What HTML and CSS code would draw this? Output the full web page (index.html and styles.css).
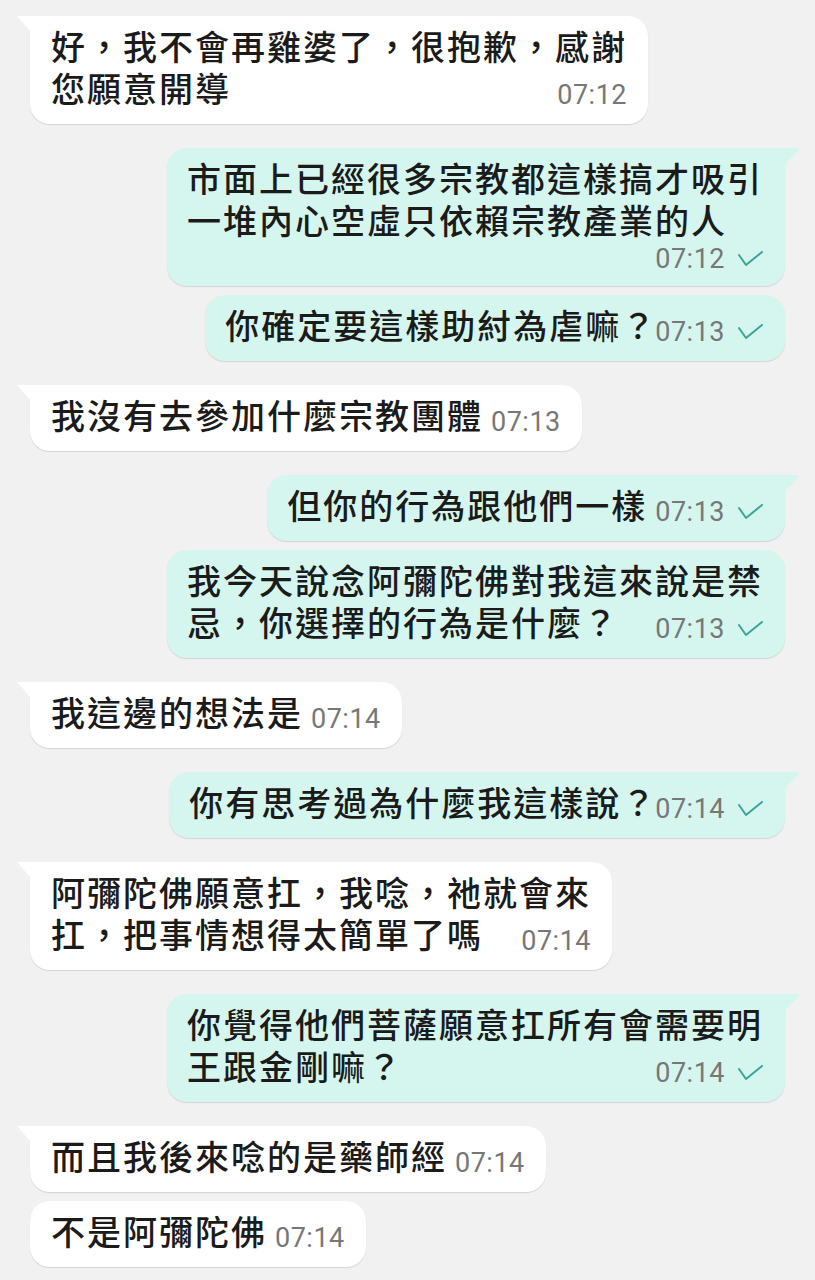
FILE: index.html
```html
<!DOCTYPE html>
<html lang="zh-Hant">
<head>
  <meta charset="UTF-8">
  <meta name="viewport" content="width=device-width, initial-scale=1.0">
  <title>聊天</title>
  <link rel="stylesheet" href="styles.css">
</head>
<body>

  <div class="chat">
    <div class="msg in first">好，我不會再雞婆了，很抱歉，感謝<br>您願意開導<span class="meta"><span class="time">07:12</span></span></div>

    <div class="msg out first tall">市面上已經很多宗教都這樣搞才吸引<br>一堆內心空虛只依賴宗教產業的人<span class="meta"><span class="time">07:12</span><svg class="tick" viewBox="0 0 25 16"><polyline points="1,4 8,14 24,1"/></svg></span></div>
    <div class="msg out">你確定要這樣助紂為虐嘛<span class="q">？</span><span class="meta"><span class="time">07:13</span><svg class="tick" viewBox="0 0 25 16"><polyline points="1,4 8,14 24,1"/></svg></span></div>

    <div class="msg in first">我沒有去參加什麼宗教團體<span class="meta"><span class="time">07:13</span></span></div>

    <div class="msg out first">但你的行為跟他們一樣<span class="meta"><span class="time">07:13</span><svg class="tick" viewBox="0 0 25 16"><polyline points="1,4 8,14 24,1"/></svg></span></div>
    <div class="msg out">我今天說念阿彌陀佛對我這來說是禁<br>忌，你選擇的行為是什麼？<span class="meta"><span class="time">07:13</span><svg class="tick" viewBox="0 0 25 16"><polyline points="1,4 8,14 24,1"/></svg></span></div>

    <div class="msg in first">我這邊的想法是<span class="meta"><span class="time">07:14</span></span></div>

    <div class="msg out first">你有思考過為什麼我這樣說<span class="q">？</span><span class="meta"><span class="time">07:14</span><svg class="tick" viewBox="0 0 25 16"><polyline points="1,4 8,14 24,1"/></svg></span></div>

    <div class="msg in first">阿彌陀佛願意扛，我唸，祂就會來<br>扛，把事情想得太簡單了嗎<span class="meta"><span class="time">07:14</span></span></div>

    <div class="msg out first">你覺得他們菩薩願意扛所有會需要明<br>王跟金剛嘛？<span class="meta"><span class="time">07:14</span><svg class="tick" viewBox="0 0 25 16"><polyline points="1,4 8,14 24,1"/></svg></span></div>

    <div class="msg in first">而且我後來唸的是藥師經<span class="meta"><span class="time">07:14</span></span></div>
    <div class="msg in">不是阿彌陀佛<span class="meta"><span class="time">07:14</span></span></div>
  </div>

</body>
</html>
```

FILE: styles.css
```css
body {
  margin: 0;
  padding: 0;
  background-color: #f1f1f1;
  font-family: "Noto Sans CJK TC", "Noto Sans", sans-serif;
}
.chat {
  display: flex;
  flex-direction: column;
  padding: 16px 30px;
}
.msg {
  position: relative;
  align-self: flex-start;
  max-width: 618px;
  box-sizing: border-box;
  padding: 9px 21px 15px 21px;
  margin-top: 9px;
  border-radius: 20px;
  background-color: #fff;
  box-shadow: 0 1px 1px rgba(0, 0, 0, 0.12);
  color: #1b1b1b;
  font-size: 34px;
  font-weight: 500;
  line-height: 42px;
  letter-spacing: 2px;
}
.msg.first {
  margin-top: 24px;
}
.msg.first:first-child {
  margin-top: 0;
}
.msg.out {
  align-self: flex-end;
  padding: 9px 22px 15px 20px;
  background-color: #d5f6ef;
}

/* tails on the first bubble of a group */
.msg.in.first {
  border-top-left-radius: 0;
}
.msg.in.first::before {
  content: "";
  position: absolute;
  left: -13px;
  top: 0;
  width: 14px;
  height: 16px;
  background-color: #fff;
  clip-path: polygon(0 0, 100% 0, 100% 100%);
}
.msg.out.first {
  border-top-right-radius: 0;
}
.msg.out.first::before {
  content: "";
  position: absolute;
  right: -15px;
  top: 0;
  width: 16px;
  height: 17px;
  background-color: #d5f6ef;
  clip-path: polygon(0 0, 92% 0, 100% 8%, 0 100%);
}

.q {
  letter-spacing: -8px;
}
.meta {
  float: right;
  display: flex;
  align-items: center;
  gap: 13px;
  margin-left: 8px;
  padding-top: 7px;
  margin-bottom: -7px;
  line-height: 42px;
  font-family: Roboto, "Liberation Sans", sans-serif;
  font-size: 27px;
  font-weight: 400;
  letter-spacing: 0.5px;
  color: #777;
}
.tall .meta {
  line-height: 24px;
  padding-top: 6px;
  margin-bottom: 0;
}
.tick {
  width: 25px;
  height: 16px;
  fill: none;
  stroke: #3aa497;
  stroke-width: 2;
  stroke-linecap: round;
  stroke-linejoin: round;
}
```
